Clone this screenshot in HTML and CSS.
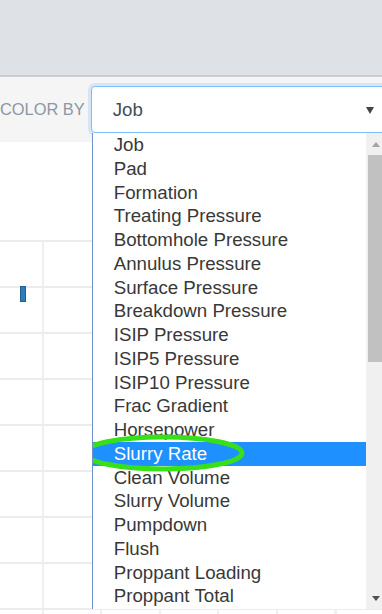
FILE: index.html
```html
<!DOCTYPE html>
<html lang="en">
<head>
<meta charset="utf-8">
<title>Color by</title>
<link rel="stylesheet" href="styles.css">
</head>
<body>
<div class="topbar"></div>
<div class="filterbar">
  <span class="label">COLOR BY</span>
  <div class="select">
    <span class="value">Job</span>
    <span class="caret"></span>
    <div class="menu">
      <ul class="options">
        <li>Job</li>
        <li>Pad</li>
        <li>Formation</li>
        <li>Treating Pressure</li>
        <li>Bottomhole Pressure</li>
        <li>Annulus Pressure</li>
        <li>Surface Pressure</li>
        <li>Breakdown Pressure</li>
        <li>ISIP Pressure</li>
        <li>ISIP5 Pressure</li>
        <li>ISIP10 Pressure</li>
        <li>Frac Gradient</li>
        <li>Horsepower</li>
        <li class="active">Slurry Rate
          <svg class="circle" width="168" height="42" viewBox="0 0 168 42"><ellipse cx="84" cy="21" rx="79" ry="16" fill="none" stroke="#38e019" stroke-width="5"/></svg>
        </li>
        <li>Clean Volume</li>
        <li>Slurry Volume</li>
        <li>Pumpdown</li>
        <li>Flush</li>
        <li>Proppant Loading</li>
        <li>Proppant Total</li>
      </ul>
      <div class="scrollbar">
        <div class="sb-btn"><span class="arr-up"></span></div>
        <div class="thumb"></div>
        <div class="track"></div>
        <div class="sb-btn"><span class="arr-down"></span></div>
      </div>
    </div>
  </div>
</div>
<div class="chart">
  <div class="plot"><div class="bar"></div></div>
</div>
</body>
</html>
```
FILE: styles.css
```css
html, body {
  margin: 0;
  padding: 0;
}
body {
  width: 382px;
  height: 614px;
  overflow: hidden;
  background: #fff;
  font-family: "Liberation Sans", Arial, sans-serif;
}
.topbar {
  height: 75px;
  background: #dee2e6;
  border-bottom: 2px solid #cacdd1;
}
.filterbar {
  height: 65px;
  background: #f5f5f5;
  display: flex;
  align-items: center;
  gap: 6px;
  position: relative;
  z-index: 2;
}
.label {
  font-size: 16.4px;
  color: #8b97a4;
  white-space: nowrap;
}
.select {
  position: relative;
  flex: none;
  width: 296px;
  height: 47px;
  box-sizing: border-box;
  border: 1px solid #80bdff;
  border-radius: 4px;
  background: #fff;
  box-shadow: 0 0 0 3px rgba(0, 123, 255, 0.12);
  display: flex;
  align-items: center;
  justify-content: space-between;
  padding: 0 12px 0 21px;
}
.value {
  font-size: 18.7px;
  color: #454c53;
}
.caret {
  width: 0;
  height: 0;
  border-left: 4px solid transparent;
  border-right: 4px solid transparent;
  border-top: 7px solid #444;
  margin-top: 1px;
}
.menu {
  position: absolute;
  left: 0;
  top: calc(100% + 1px);
  width: 293px;
  height: 476px;
  box-sizing: border-box;
  background: #fff;
  border-left: 1px solid #6f93c8;
  display: flex;
}
.options {
  list-style: none;
  margin: 0;
  padding: 0;
  flex: 1;
  overflow: hidden;
}
.options li {
  height: 23.75px;
  line-height: 23.75px;
  padding-left: 21px;
  font-size: 18.7px;
  color: #383838;
  white-space: nowrap;
}
.options li.active {
  position: relative;
  background: #1e90ff;
  color: #fff;
}
.circle {
  position: absolute;
  left: -14px;
  top: -10px;
  z-index: 3;
}
.scrollbar {
  width: 19px;
  flex: none;
  background: #f0f0f0;
  display: flex;
  flex-direction: column;
}
.sb-btn {
  height: 22px;
  display: flex;
  align-items: center;
  justify-content: center;
  padding-left: 2px;
}
.arr-up {
  width: 0;
  height: 0;
  border-left: 4.5px solid transparent;
  border-right: 4.5px solid transparent;
  border-bottom: 5px solid #a3a3a3;
}
.arr-down {
  width: 0;
  height: 0;
  border-left: 4.5px solid transparent;
  border-right: 4.5px solid transparent;
  border-top: 5px solid #505050;
}
.thumb {
  height: 207px;
  margin-left: 2px;
  background: #c1c1c1;
}
.track {
  flex: 1;
}
.chart {
  padding-top: 98px;
}
.plot {
  position: relative;
  height: 374px;
  background-image:
    repeating-linear-gradient(to bottom, #ececec 0, #ececec 2px, transparent 2px, transparent 46px),
    repeating-linear-gradient(to right, transparent 0, transparent 42px, #efefef 42px, #efefef 44px, transparent 44px, transparent 58.5px);
}
.bar {
  position: absolute;
  left: 20px;
  top: 46px;
  width: 6px;
  height: 16px;
  box-sizing: border-box;
  background: #2f7db8;
  border: 1px solid #205f8f;
}
```
